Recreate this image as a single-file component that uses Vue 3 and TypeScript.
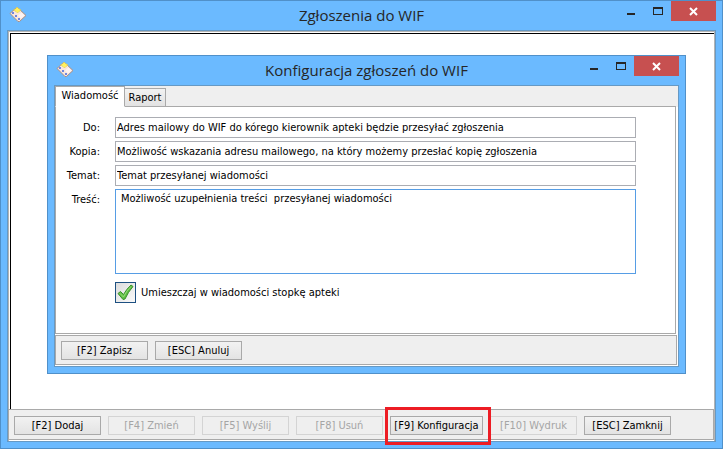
<script setup lang="ts">
import { computed, defineComponent, h, ref } from 'vue'

interface ActionButton {
  key: string
  label: string
  disabled?: boolean
  highlighted?: boolean
}

const mainActions: ActionButton[] = [
  { key: 'F2', label: 'Dodaj' },
  { key: 'F4', label: 'Zmień', disabled: true },
  { key: 'F5', label: 'Wyślij', disabled: true },
  { key: 'F8', label: 'Usuń', disabled: true },
  { key: 'F9', label: 'Konfiguracja', highlighted: true },
  { key: 'F10', label: 'Wydruk', disabled: true },
  { key: 'ESC', label: 'Zamknij' },
]

const dialogActions: ActionButton[] = [
  { key: 'F2', label: 'Zapisz' },
  { key: 'ESC', label: 'Anuluj' },
]

const tabs = ['Wiadomość', 'Raport']
const activeTab = ref(0)
const isMessageTab = computed(() => activeTab.value === 0)

const recipient = ref('Adres mailowy do WIF do kórego kierownik apteki będzie przesyłać zgłoszenia')
const copy = ref('Możliwość wskazania adresu mailowego, na który możemy przesłać kopię zgłoszenia')
const subject = ref('Temat przesyłanej wiadomości')
const body = ref('Możliwość uzupełnienia treści  przesyłanej wiadomości')
const footer = ref(true)

const AppIcon = defineComponent({
  render: () =>
    h('svg', { width: 18, height: 17, viewBox: '0 0 18 17', 'aria-hidden': 'true' }, [
      h('path', { d: 'M1 7.5 7 2H9L17 9.5 10.5 15.5H9Z', fill: '#f9e6dc', stroke: '#a98f86', 'stroke-width': 1 }),
      h('path', { d: 'M9 9.5 12.5 6.5 15.5 9.5 12 12.5Z', fill: '#fdf3f3' }),
      h('path', { d: 'M4.5 4 6.5 3 8 1 9.5 2.5 12 4 10 5.5 8.5 7 7 5.5Z', fill: '#fff25c', stroke: '#dcc653', 'stroke-width': 0.6 }),
      h('path', { d: 'M3 6h2v2H3zM6 9h2v2H6zM9 12h2v2H9z', fill: '#6f86e0' }),
    ]),
})

const WindowControls = defineComponent({
  render: () =>
    h('div', { class: 'controls' }, [
      h('button', { type: 'button', class: 'control', 'aria-label': 'Minimalizuj' }, [
        h('svg', { width: 11, height: 20, viewBox: '0 0 11 20' }, [
          h('rect', { x: 2, y: 12, width: 8, height: 2, fill: '#262626' }),
        ]),
      ]),
      h('button', { type: 'button', class: 'control', 'aria-label': 'Maksymalizuj' }, [
        h('svg', { width: 11, height: 20, viewBox: '0 0 11 20' }, [
          h('path', { d: 'M1 6h10v8H1zM2 8v5h8V8z', fill: '#262626', 'fill-rule': 'evenodd' }),
        ]),
      ]),
      h('button', { type: 'button', class: 'control close', 'aria-label': 'Zamknij okno' }, [
        h('svg', { width: 9, height: 20, viewBox: '0 0 9 20' }, [
          h('path', { d: 'M1 7l7 7M8 7l-7 7', fill: 'none', stroke: '#fff', 'stroke-width': 2 }),
        ]),
      ]),
    ]),
})
</script>

<template>
  <main class="window main-window">
    <header class="titlebar">
      <AppIcon class="app-icon" />
      <h1 class="title">Zgłoszenia do WIF</h1>
      <WindowControls />
    </header>
    <div class="client">
      <div class="workspace">
        <section class="window dialog" role="dialog" aria-labelledby="dialog-title">
          <header class="titlebar">
            <AppIcon class="app-icon" />
            <h2 id="dialog-title" class="title">Konfiguracja zgłoszeń do WIF</h2>
            <WindowControls />
          </header>
          <div class="client">
            <div class="tabs" role="tablist">
              <button
                v-for="(tab, index) in tabs"
                :key="tab"
                type="button"
                role="tab"
                class="tab"
                :class="{ active: index === activeTab }"
                :aria-selected="index === activeTab"
                @click="activeTab = index"
              >{{ tab }}</button>
              <span class="tab-rest"></span>
            </div>
            <div class="panel" role="tabpanel">
              <form v-if="isMessageTab" class="form" @submit.prevent>
                <label for="recipient">Do:</label>
                <input id="recipient" v-model="recipient" type="text" class="field" />
                <label for="copy">Kopia:</label>
                <input id="copy" v-model="copy" type="text" class="field" />
                <label for="subject">Temat:</label>
                <input id="subject" v-model="subject" type="text" class="field" />
                <label for="body">Treść:</label>
                <textarea id="body" v-model="body" class="field area"></textarea>
                <div class="option">
                  <span class="check">
                    <input id="footer" v-model="footer" type="checkbox" />
                    <svg v-if="footer" class="tick" width="19" height="19" viewBox="0 0 19 19" aria-hidden="true">
                      <path d="M2 10.5 4.5 8.5 7.5 11.5Q10.5 6 15 2L17 3.5Q12 9 9 16L7 16.5Z" fill="#5fbf45" stroke="#3b8f2c" stroke-linejoin="round" />
                      <path d="M4 10.5 7.5 14Q10.5 7.5 15 3.5" fill="none" stroke="#96dc76" />
                    </svg>
                  </span>
                  <label for="footer">Umieszczaj w wiadomości stopkę apteki</label>
                </div>
              </form>
            </div>
            <footer class="toolbar">
              <button v-for="action in dialogActions" :key="action.key" type="button" class="action">[{{ action.key }}] {{ action.label }}</button>
            </footer>
          </div>
        </section>
      </div>
      <footer class="toolbar main-toolbar">
        <span v-for="action in mainActions" :key="action.key" class="slot" :class="{ highlighted: action.highlighted }">
          <button type="button" class="action" :disabled="action.disabled">[{{ action.key }}] {{ action.label }}</button>
        </span>
      </footer>
    </div>
  </main>
</template>

<style>
body {
  margin: 0;
  background: #fff;
}

.controls {
  display: flex;
  justify-self: end;
  align-self: start;
}

.control {
  display: flex;
  justify-content: center;
  width: 27px;
  height: 20px;
  padding: 0;
  border: 0;
  background: transparent;
}

.control.close {
  width: 45px;
  background: #c75050;
}
</style>

<style scoped>
.window {
  box-sizing: border-box;
  display: flex;
  flex-direction: column;
  padding: 0 6px 6px;
  border: 1px solid #5090c9;
  background: #6bbaff;
  color: #000;
  font-family: "DejaVu Sans Condensed", Tahoma, sans-serif;
  font-size: 11px;
}

.main-window {
  min-height: 100vh;
}

.titlebar {
  display: grid;
  grid-template-columns: 1fr auto 1fr;
  height: 29px;
}

.app-icon {
  margin: 5px 0 0 2px;
}

.title {
  margin: 0;
  color: #262626;
  font: 400 15px/28px "Open Sans", "Noto Sans", sans-serif;
}

.client {
  display: flex;
  flex: 1;
  flex-direction: column;
  border: 1px solid #6699c4;
  background: #fff;
}

.main-window > .client {
  box-shadow: inset 1px 1px #b4b4b4, inset -1px 0 #b4b4b4;
}

.workspace {
  flex: 1;
  margin: 2px 1px 0 2px;
  padding: 21px 28px 35px 36px;
  border-top: 1px solid #000;
  border-left: 1px solid #000;
}

.tabs {
  display: flex;
  align-items: flex-end;
  height: 21px;
  margin-right: 2px;
  background: #efefef;
  box-shadow: 2px 0 #efefef;
}

.tab {
  box-sizing: border-box;
  min-width: 41px;
  height: 19px;
  padding: 0 3px;
  border: 1px solid #a9a9a9;
  border-left: 0;
  background: linear-gradient(#f2f2f2, #e2e2e2);
  color: #000;
  font: inherit;
}

.tab.active {
  min-width: 70px;
  height: 21px;
  padding: 0 5px 2px;
  border-bottom-color: #fff;
  border-left: 1px solid #a9a9a9;
  background: #fff;
}

.tab-rest {
  flex: 1;
  border-bottom: 1px solid #a9a9a9;
}

.panel {
  flex: 1;
  margin-right: 2px;
  padding: 10px 39px 30px 0;
  border: 1px solid #a9a9a9;
  border-top: 0;
}

.form {
  display: grid;
  grid-template-columns: 44px 1fr;
  gap: 3px 15px;
}

.form > label {
  line-height: 21px;
  text-align: right;
}

.field {
  box-sizing: border-box;
  width: 100%;
  height: 21px;
  margin: 0;
  padding: 0 1px;
  border: 1px solid #abadb3;
  border-radius: 0;
  outline: 0;
  background: #fff;
  color: #000;
  font: inherit;
}

.area {
  height: 85px;
  padding: 2px 5px;
  border-color: #569de5;
  resize: none;
}

.option {
  display: flex;
  grid-column: 2;
  align-items: center;
  gap: 5px;
  margin-top: 5px;
}

.check {
  display: grid;
  width: 21px;
  height: 21px;
}

.check > * {
  grid-area: 1 / 1;
  place-self: center;
}

.check input {
  box-sizing: border-box;
  width: 21px;
  height: 21px;
  margin: 0;
  appearance: none;
  border: 1px solid #1d5081;
  background: linear-gradient(135deg, #dcdcdc, #fafafa);
}

.tick {
  z-index: 1;
  pointer-events: none;
}

.toolbar {
  display: flex;
  gap: 7px;
  margin: 1px 1px 1px 0;
  padding: 5px 5px 4px;
  border: 1px solid #a9a9a9;
  background: #efefef;
}

.main-toolbar {
  margin-top: 0;
  padding-top: 6px;
}

.action {
  box-sizing: border-box;
  min-width: 87px;
  height: 19px;
  padding: 0 3px;
  border: 1px solid #a9a9a9;
  background: linear-gradient(#f2f2f2, #e3e3e3);
  color: #000;
  font: inherit;
  line-height: 17px;
  white-space: nowrap;
}

.action:disabled {
  border-color: #d4d4d4;
  background: #efefef;
  color: #a5a5a5;
}

.slot {
  display: flex;
}

.highlighted {
  position: relative;
}

.highlighted .action {
  min-width: 93px;
}

.highlighted::after {
  content: "";
  position: absolute;
  inset: -9px -8px -10px -5px;
  border: 3px solid #ed1c24;
  pointer-events: none;
}
</style>
